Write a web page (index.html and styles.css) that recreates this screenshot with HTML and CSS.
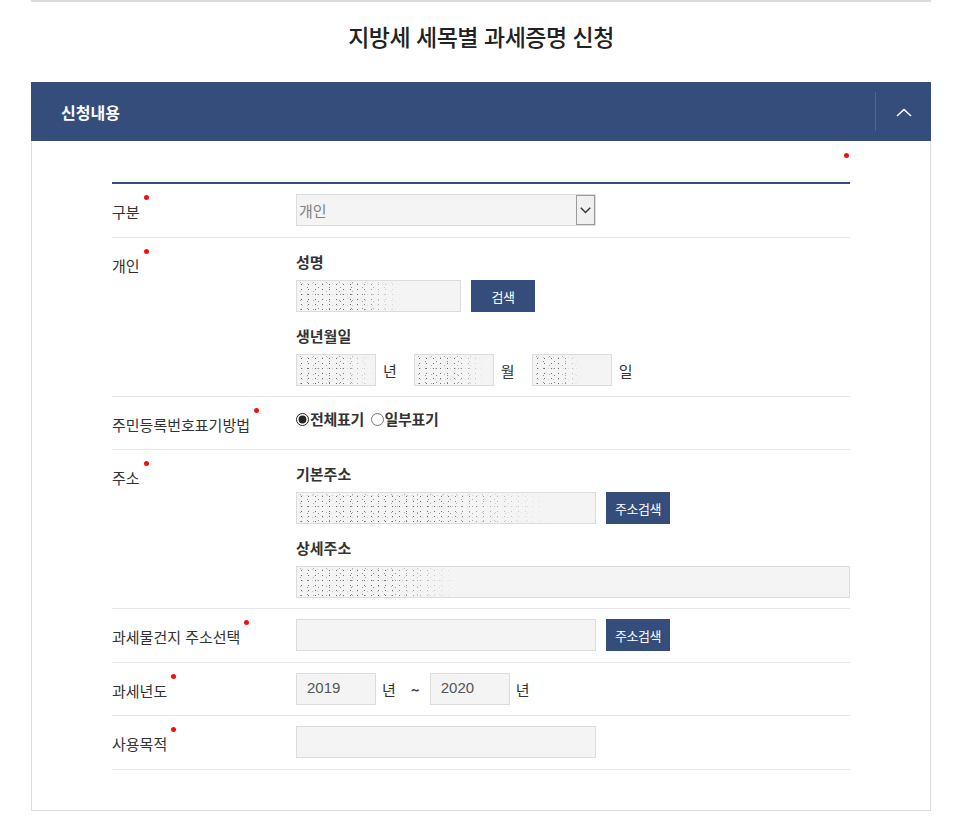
FILE: index.html
```html
<!DOCTYPE html>
<html lang="ko">
<head>
  <meta charset="UTF-8">
  <title>지방세 세목별 과세증명 신청</title>
  <link rel="stylesheet" href="styles.css">
</head>
<body>
  <div class="wrap">
    <h2 class="page-title">지방세 세목별 과세증명 신청</h2>

    <section class="panel">
      <div class="panel-head">
        <h3>신청내용</h3>
        <button type="button" class="toggle" aria-label="접기">
          <svg width="16" height="9" viewBox="0 0 16 9"><path d="M1 8 L8 1.5 L15 8" fill="none" stroke="#fff" stroke-width="1.6"/></svg>
        </button>
      </div>

      <div class="panel-body">
        <p class="req-note"><span class="dot"></span></p>

        <div class="form-table">
          <div class="row">
            <div class="th"><span class="req">구분</span></div>
            <div class="td">
              <div class="select-box">
                <select>
                  <option>개인</option>
                  <option>법인</option>
                </select>
                <span class="arrow">
                  <svg width="11" height="7" viewBox="0 0 11 7"><path d="M0.8 0.8 L5.5 5.6 L10.2 0.8" fill="none" stroke="#333" stroke-width="1.4"/></svg>
                </span>
              </div>
            </div>
          </div>

          <div class="row">
            <div class="th"><span class="req">개인</span></div>
            <div class="td">
              <p class="sub">성명</p>
              <div class="line">
                <span class="mask mask-name"><input type="text" class="ipt w165"></span>
                <button type="button" class="btn">검색</button>
              </div>
              <p class="sub">생년월일</p>
              <div class="line">
                <span class="mask mask-year"><input type="text" class="ipt w80"></span>
                <span class="unit">년</span>
                <span class="mask mask-md"><input type="text" class="ipt w80"></span>
                <span class="unit">월</span>
                <span class="mask mask-d"><input type="text" class="ipt w80"></span>
                <span class="unit">일</span>
              </div>
            </div>
          </div>

          <div class="row short">
            <div class="th"><span class="req">주민등록번호표기방법</span></div>
            <div class="td">
              <label class="radio"><input type="radio" name="jumin" checked>전체표기</label>
              <label class="radio"><input type="radio" name="jumin">일부표기</label>
            </div>
          </div>

          <div class="row">
            <div class="th"><span class="req">주소</span></div>
            <div class="td">
              <p class="sub">기본주소</p>
              <div class="line">
                <span class="mask mask-addr"><input type="text" class="ipt w300"></span>
                <button type="button" class="btn">주소검색</button>
              </div>
              <p class="sub">상세주소</p>
              <div class="line">
                <span class="mask mask-detail full"><input type="text" class="ipt wfull"></span>
              </div>
            </div>
          </div>

          <div class="row">
            <div class="th"><span class="req">과세물건지 주소선택</span></div>
            <div class="td">
              <div class="line">
                <input type="text" class="ipt w300">
                <button type="button" class="btn">주소검색</button>
              </div>
            </div>
          </div>

          <div class="row short">
            <div class="th"><span class="req">과세년도</span></div>
            <div class="td">
              <div class="line">
                <input type="text" class="ipt w80 year" value="2019">
                <span class="unit short">년</span>
                <span class="tilde">~</span>
                <input type="text" class="ipt w80 year" value="2020">
                <span class="unit short">년</span>
              </div>
            </div>
          </div>

          <div class="row">
            <div class="th"><span class="req">사용목적</span></div>
            <div class="td">
              <div class="line">
                <input type="text" class="ipt w300">
              </div>
            </div>
          </div>
        </div>
      </div>
    </section>
  </div>
</body>
</html>
```

FILE: styles.css
```css
* {
  margin: 0;
  padding: 0;
  box-sizing: border-box;
  font-family: "Noto Sans CJK KR", "Noto Sans", sans-serif;
}
body {
  background: #fff;
  color: #333;
}
.wrap {
  width: 900px;
  margin-left: 31px;
  border-top: 2px solid #dcdcdc;
}
.page-title {
  padding-top: 18px;
  margin-bottom: 30px;
  line-height: 32px;
  font-size: 23px;
  font-weight: 500;
  letter-spacing: -0.5px;
  color: #222;
  text-align: center;
}

/* panel */
.panel-head {
  height: 59px;
  background: #344d7b;
  display: flex;
  align-items: center;
  justify-content: space-between;
  padding-left: 30px;
}
.panel-head h3 {
  color: #fff;
  font-size: 16px;
  font-weight: 700;
}
.toggle {
  width: 56px;
  height: 39px;
  background: none;
  border: none;
  border-left: 1px solid rgba(255,255,255,0.14);
  display: flex;
  align-items: center;
  justify-content: center;
  cursor: pointer;
}
.toggle svg {
  margin-top: 2px;
}
.panel-body {
  border: 1px solid #dcdcdc;
  border-top: none;
  padding: 0 80px 40px;
}
.req-note {
  height: 41px;
  padding-top: 10px;
  text-align: right;
  line-height: 0;
}
.dot {
  display: inline-block;
  width: 5px;
  height: 5px;
  border-radius: 50%;
  background: #f01010;
  margin-right: 1px;
}

/* form table */
.form-table {
  border-top: 2px solid #344d7b;
}
.row {
  display: grid;
  grid-template-columns: 184px 1fr;
  border-bottom: 1px solid #e6e6e6;
}
.th {
  height: 53px;
  padding-top: 18px;
  line-height: 20px;
  font-size: 15px;
  color: #333;
}
.row.short .th {
  height: 52px;
}
.req {
  position: relative;
  padding-right: 9px;
}
.req::after {
  content: "";
  position: absolute;
  right: 0;
  top: -6px;
  width: 5px;
  height: 5px;
  border-radius: 50%;
  background: #f01010;
}
.td {
  padding: 10px 0;
}
.sub {
  margin-top: 13px;
  margin-bottom: 7px;
  height: 22px;
  line-height: 22px;
  font-size: 15px;
  font-weight: 700;
  color: #333;
}
.sub:first-child {
  margin-top: 3px;
}
.line {
  display: flex;
  align-items: center;
  height: 32px;
}

.ipt {
  display: block;
  height: 32px;
  border: 1px solid #dcdcdc;
  background: #f4f4f4;
  padding: 0 10px;
  font-size: 15px;
  color: #444;
  outline: none;
}
.ipt.year {
  font-family: "Liberation Sans", sans-serif;
  color: #555;
  padding-bottom: 4px;
}
.w80 { width: 80px; }
.w165 { width: 165px; }
.w300 { width: 300px; }
.wfull { width: 100%; }

.btn {
  height: 32px;
  min-width: 64px;
  margin-left: 10px;
  padding: 0 8px;
  background: #344d7b;
  border: none;
  color: #fff;
  font-size: 13px;
  letter-spacing: -0.5px;
  cursor: pointer;
}

.unit {
  margin: 0 17px 0 7px;
  font-size: 15px;
  color: #333;
}
.unit.short {
  margin: 0 0 0 6px;
}
.tilde {
  margin: 0 10px 0 15px;
  font-size: 15px;
  font-weight: 700;
  color: #444;
}

/* select */
.select-box {
  position: relative;
  width: 300px;
}
.select-box select {
  display: block;
  width: 100%;
  height: 32px;
  border: 1px solid #dcdcdc;
  background: #f4f4f4;
  padding: 0 2px;
  font-size: 15px;
  color: #808080;
  appearance: none;
  -webkit-appearance: none;
  outline: none;
}
.select-box .arrow {
  position: absolute;
  right: 1px;
  top: 1px;
  width: 19px;
  height: 30px;
  border: 1px solid #9a9a9a;
  background: #f0f0f0;
  display: flex;
  align-items: center;
  justify-content: center;
  pointer-events: none;
}

/* radios */
.radio {
  display: inline-flex;
  align-items: center;
  height: 22px;
  line-height: 22px;
  font-size: 15px;
  font-weight: 700;
  letter-spacing: -0.3px;
  color: #333;
  margin-right: 2px;
}
.radio input {
  width: 13px;
  height: 13px;
  margin: 1px 1px 0 0;
  accent-color: #222;
}

/* blurred personal data */
.mask {
  position: relative;
  display: block;
}
.mask.full {
  width: 100%;
}
.mask::after {
  content: "";
  position: absolute;
  left: 2px;
  top: 2px;
  bottom: 0;
  pointer-events: none;
  opacity: 0.8;
  background-image:
    radial-gradient(circle, rgba(30,30,30,0.8) 0.55px, transparent 0.9px),
    radial-gradient(circle, rgba(60,60,60,0.7) 0.55px, transparent 0.9px),
    radial-gradient(circle, rgba(90,90,90,0.6) 0.55px, transparent 0.9px),
    radial-gradient(circle, rgba(160,160,160,0.6) 0.6px, transparent 1px);
  background-size: 7px 5px, 11px 7px, 13px 9px, 5px 11px;
  background-position: 0 0, 4px 2px, 9px 5px, 2px 7px;
  -webkit-mask-image: linear-gradient(90deg, #000 55%, transparent);
  mask-image: linear-gradient(90deg, #000 55%, transparent);
}
.mask-name::after { width: 104px; }
.mask-year::after { width: 76px; }
.mask-md::after { width: 68px; }
.mask-d::after { width: 46px; }
.mask-addr::after { width: 252px; }
.mask-detail::after { width: 160px; }
```
